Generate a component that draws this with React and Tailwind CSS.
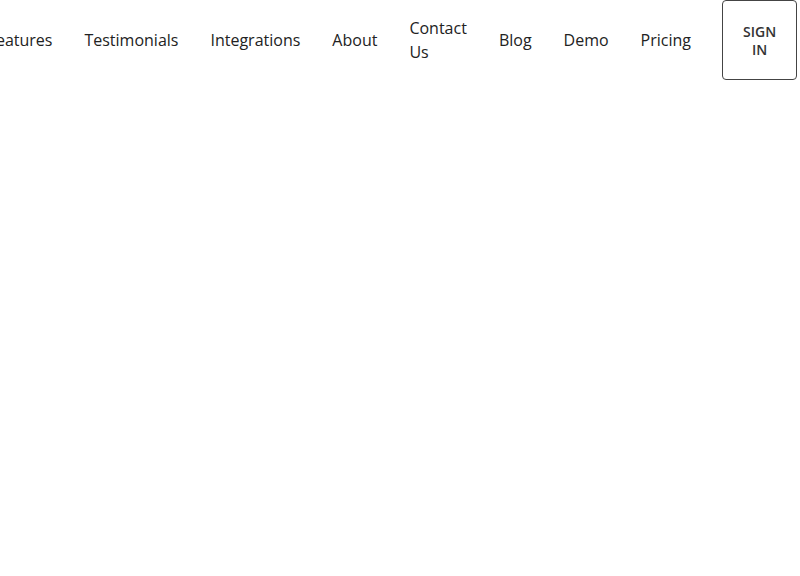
import React from 'react';

const links = ['Features', 'Testimonials', 'Integrations', 'About', 'Contact Us', 'Blog', 'Demo', 'Pricing'];

const App = () => {
  return (
    <div className="min-h-screen bg-white font-['Open_Sans',sans-serif] text-[#222]">
      {/* Top navigation */}
      <nav className="flex items-start justify-end pr-[3px]">
        <div className="flex items-center justify-end gap-8 h-20 mr-[31px] shrink">
          {links.map((label) => (
            <a key={label} href="#" className="text-base leading-6 shrink">
              {label}
            </a>
          ))}
        </div>
        <button className="shrink-0 w-[75px] h-20 border border-[#444] rounded-[4px] px-5 pt-[2px] text-sm leading-[18px] font-semibold uppercase text-[#333]">
          Sign In
        </button>
      </nav>
    </div>
  );
};

export default App;
